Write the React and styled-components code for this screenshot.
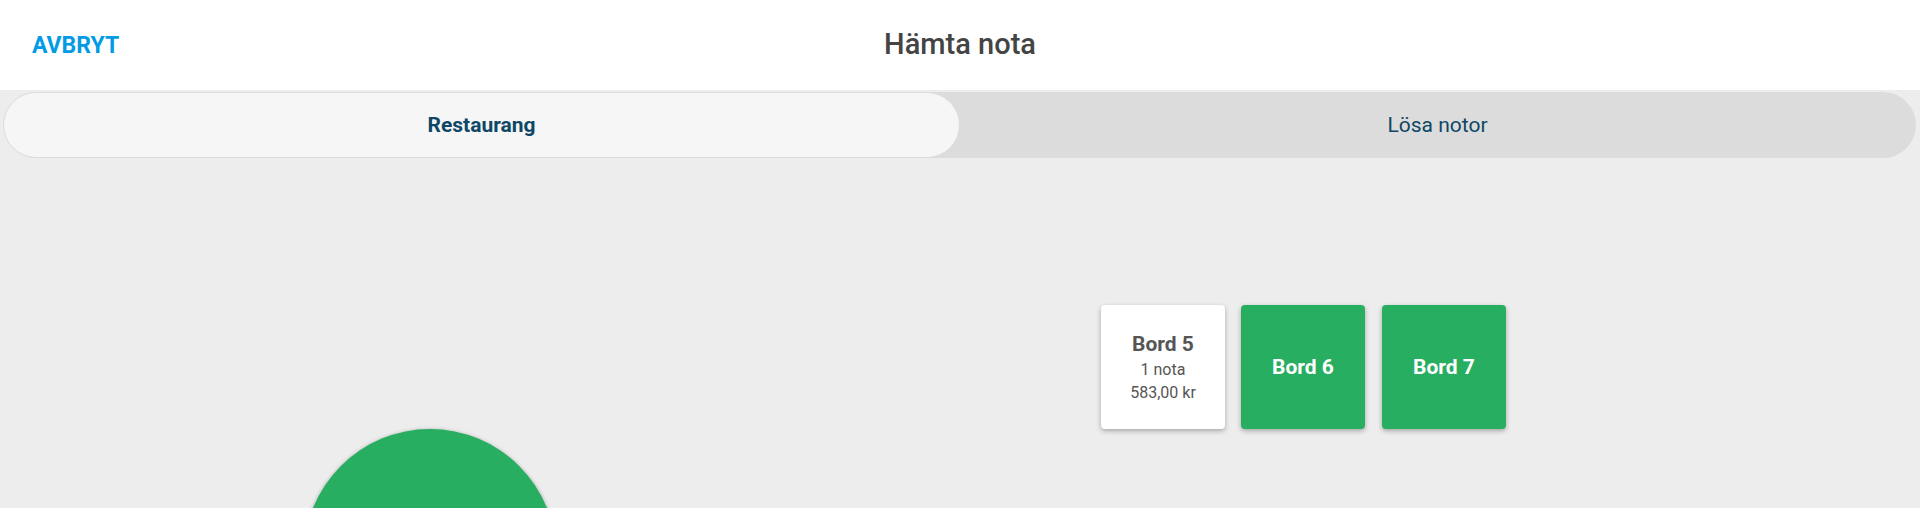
import React, { useState } from 'react';
import styled, { createGlobalStyle, css } from 'styled-components';

const tables = [
    { id: 'round', shape: 'round', left: 304, top: 271, size: 252 },
    { id: 'b5', label: 'Bord 5', left: 1101, top: 147, size: 124, notes: 1, total: '583,00 kr' },
    { id: 'b6', label: 'Bord 6', left: 1241, top: 147, size: 124 },
    { id: 'b7', label: 'Bord 7', left: 1382, top: 147, size: 124 },
];

const tabs = ['Restaurang', 'Lösa notor'];

export default function App() {
    const [activeTab, setActiveTab] = useState(0);

    return (
        <>
            <GlobalStyle/>
            <Page>
                <Header>
                    <CancelButton>AVBRYT</CancelButton>
                    <Title>Hämta nota</Title>
                    <span/>
                </Header>
                <TabsWrapper>
                    <TabTrack>
                        {tabs.map((tab, index) => (
                            <Tab key={tab} active={index === activeTab} onClick={() => setActiveTab(index)}>
                                {tab}
                            </Tab>
                        ))}
                    </TabTrack>
                </TabsWrapper>
                <FloorPlan>
                    {tables.map((table) => table.shape === 'round'
                        ? <RoundTable key={table.id} x={table.left} y={table.top} size={table.size}/>
                        : (
                            <TableTile key={table.id} x={table.left} y={table.top} size={table.size} occupied={!!table.notes}>
                                <TableName>{table.label}</TableName>
                                {table.notes && (
                                    <>
                                        <TableInfo>{table.notes} nota</TableInfo>
                                        <TableInfo>{table.total}</TableInfo>
                                    </>
                                )}
                            </TableTile>
                        ))}
                </FloorPlan>
            </Page>
        </>
    );
}

/**
 * STYLED COMPONENT BLOCK
 */
const GlobalStyle = createGlobalStyle`
  html, body {
    margin: 0;
    padding: 0;
    background: #ededed;
    font-family: Roboto, "Liberation Sans", sans-serif;
  }
`;

const Page = styled.div`
  display: flex;
  flex-direction: column;
  height: 508px;
  overflow: hidden;
`;

const Header = styled.div`
  height: 90px;
  background: #fff;
  display: grid;
  grid-template-columns: 1fr auto 1fr;
  align-items: center;
  padding: 0 32px;
`;

const CancelButton = styled.button`
  justify-self: start;
  border: none;
  background: none;
  padding: 0;
  margin-top: 1px;
  cursor: pointer;
  font-family: Roboto, sans-serif;
  font-size: 23px;
  font-weight: 700;
  color: #039be5;
`;

const Title = styled.div`
  font-size: 29px;
  font-weight: 500;
  color: #444;
  margin-top: -2px;
`;

const TabsWrapper = styled.div`
  padding: 2px 4px 0;
`;

const TabTrack = styled.div`
  display: flex;
  height: 66px;
  background: #dcdcdc;
  border-radius: 33px;
`;

const Tab = styled.div`
  flex: 1 1 0;
  display: flex;
  align-items: center;
  justify-content: center;
  border-radius: 33px;
  font-size: 21px;
  color: #0e4766;
  cursor: pointer;
  border: 1px solid transparent;
  ${props => props.active && css`
    background: #f6f6f6;
    border-color: #dcdcdc;
    font-weight: 700;
    margin: 0 -1px 0 -1px;
  `}
`;

const FloorPlan = styled.div`
  position: relative;
  flex: 1;
`;

const RoundTable = styled.div`
  position: absolute;
  left: ${props => props.x}px;
  top: ${props => props.y}px;
  width: ${props => props.size}px;
  height: ${props => props.size}px;
  border-radius: 50%;
  background: #27ae60;
  box-shadow: 0 1px 4px rgba(0, 0, 0, 0.35);
`;

const TableTile = styled.div`
  position: absolute;
  left: ${props => props.x}px;
  top: ${props => props.y}px;
  width: ${props => props.size}px;
  height: ${props => props.size}px;
  box-sizing: border-box;
  border-radius: 4px;
  display: flex;
  flex-direction: column;
  align-items: center;
  justify-content: center;
  background: ${props => props.occupied ? '#fff' : '#27ae60'};
  color: ${props => props.occupied ? '#555' : '#fff'};
  box-shadow: 0 2px 5px rgba(0, 0, 0, 0.3);
  cursor: pointer;
`;

const TableName = styled.div`
  font-size: 21px;
  font-weight: 700;
  line-height: 27px;
`;

const TableInfo = styled.div`
  font-size: 16px;
  line-height: 23px;
`;
